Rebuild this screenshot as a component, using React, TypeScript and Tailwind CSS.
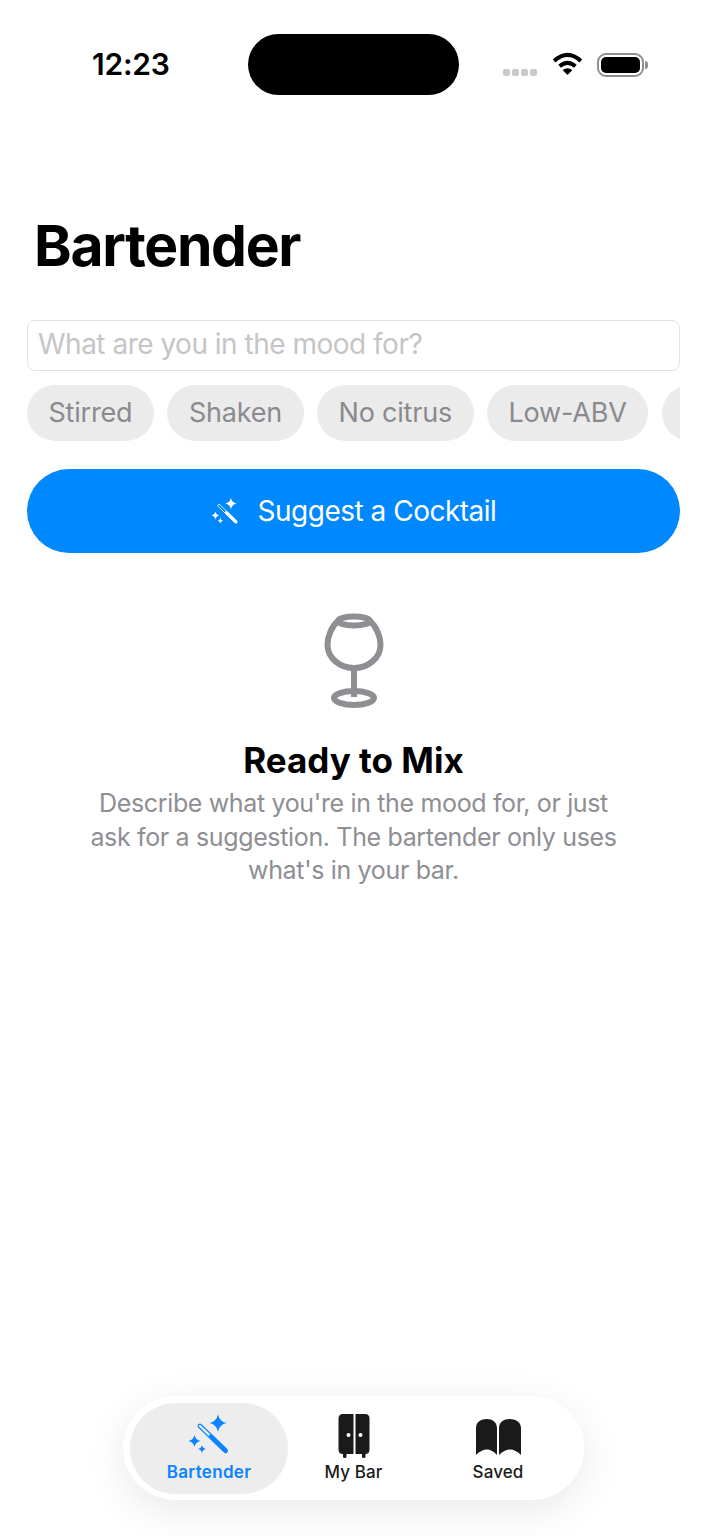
import React from "react";

const chips = ["Stirred", "Shaken", "No citrus", "Low-ABV"];

/* ---------- Icons ---------- */
const sparkle = (cx: number, cy: number, r: number) => {
  const k = r * 0.18;
  return `M${cx} ${cy - r}Q${cx + k} ${cy - k} ${cx + r} ${cy}Q${cx + k} ${cy + k} ${cx} ${cy + r}Q${cx - k} ${cy + k} ${cx - r} ${cy}Q${cx - k} ${cy - k} ${cx} ${cy - r}Z`;
};

const WandIcon: React.FC<{ className: string }> = ({ className }) => (
  <svg viewBox="0 -2 42 44" className={className} fill="currentColor">
    <path d={sparkle(30, 8, 8.5)} />
    <path d={sparkle(6.5, 26, 6)} />
    <path d={sparkle(14, 34, 4)} />
    <g transform="translate(12 11) rotate(44)">
      <rect x="-1.8" y="-1.8" width="38" height="3.6" rx="1.8" fill="none" stroke="currentColor" strokeWidth="1.2" />
      <rect x="13" y="-2.3" width="25" height="4.6" rx="2.3" />
    </g>
  </svg>
);

const GlassIcon = () => (
  <svg viewBox="0 0 68 100" className="h-[100px] w-[68px] text-[#8e8e93]" fill="none" stroke="currentColor" strokeWidth="6">
    <ellipse cx="34" cy="11" rx="16" ry="4.5" />
    <path d="M18 11C12 16 7.5 26 7.5 35C7.5 48 20 58 34 58C48 58 60.5 48 60.5 35C60.5 26 56 16 50 11" />
    <path d="M34 58V87" />
    <ellipse cx="34" cy="88" rx="20" ry="7" />
  </svg>
);

const CabinetIcon = () => (
  <svg viewBox="0 0 32 46" className="h-[46px] w-[32px] text-[#1a1a1a]" fill="currentColor">
    <path fillRule="evenodd" d="M5 1H15.5V41H5Q.5 41 .5 36.5V5.5Q.5 1 5 1ZM10.5 20a2 2 0 1 0 0 4a2 2 0 1 0 0-4Z" />
    <path fillRule="evenodd" d="M17.5 1H27Q31.5 1 31.5 5.5V36.5Q31.5 41 27 41H17.5ZM22.5 20a2 2 0 1 0 0 4a2 2 0 1 0 0-4Z" />
    <rect x="5" y="39" width="3.5" height="6" rx="1.5" />
    <rect x="24" y="39" width="3.5" height="6" rx="1.5" />
  </svg>
);

const BookIcon = () => (
  <svg viewBox="0 0 46 46" className="h-[46px] w-[46px] text-[#1a1a1a]" fill="currentColor">
    <path d="M1 42V15C1 9 6 6 12 6C17 6 22 9 22 15V42Q12 31 1 42Z" />
    <path d="M24 15C24 9 29 6 34.5 6C40.5 6 46 9 46 15V42Q35 31 24 42Z" />
  </svg>
);

const WifiIcon = () => (
  <svg viewBox="0 0 31 23" className="h-[23px] w-[31px]">
    <path d="M2.2 9Q15.5 -3.2 28.8 9" fill="none" stroke="black" strokeWidth="4" />
    <path d="M7.6 14.2Q15.5 7.6 23.4 14.2" fill="none" stroke="black" strokeWidth="4" />
    <path d="M15.5 23L10.6 18Q15.5 14.6 20.4 18Z" fill="black" />
  </svg>
);

/* ---------- Status bar ---------- */
const StatusBar = () => (
  <div className="grid h-[61px] grid-cols-[248px_211px_248px] items-center">
    <span className="pl-[92px] text-[30px] font-semibold tracking-[-0.2px] text-black">12:23</span>
    <div className="h-[61px] rounded-[31px] bg-black" />
    <div className="flex items-center pl-[44px]">
      <div className="mt-[15px] flex gap-[2px]">
        <span className="size-[7px] rounded-[2px] bg-[#c9c9c9]" />
        <span className="size-[7px] rounded-[2px] bg-[#c9c9c9]" />
        <span className="size-[7px] rounded-[2px] bg-[#c9c9c9]" />
        <span className="size-[7px] rounded-[2px] bg-[#c9c9c9]" />
      </div>
      <div className="ml-[15px] -mt-[2px]">
        <WifiIcon />
      </div>
      <div className="ml-[14px] flex items-center">
        <div className="h-[24px] w-[47px] rounded-[9px] border-2 border-[#8f8f8f] p-[2px]">
          <div className="h-full w-full rounded-[5px] bg-black" />
        </div>
        <div className="ml-[1px] h-[8px] w-[3px] rounded-r-full bg-[#8f8f8f]" />
      </div>
    </div>
  </div>
);

/* ---------- Tab bar ---------- */
const TabBar = () => (
  <nav className="mx-auto mb-[36px] mt-auto grid h-[104px] w-[461px] grid-cols-[158px_131px_158px] rounded-full bg-white p-[7px] shadow-[0_10px_40px_rgba(0,0,0,0.09)]">
    <div className="flex h-[91px] flex-col items-center rounded-full bg-[#ededed] pt-[10px] text-[#0a84ff]">
      <WandIcon className="h-[44px] w-[42px]" />
      <span className="mt-[5px] text-[17px] font-semibold leading-[20px] tracking-[0.3px]">Bartender</span>
    </div>
    <div className="flex flex-col items-center pt-[10px] text-[#1a1a1a]">
      <CabinetIcon />
      <span className="mt-[3px] text-[17px] font-medium leading-[20px] tracking-[0.1px]">My Bar</span>
    </div>
    <div className="flex flex-col items-center pt-[10px] text-[#1a1a1a]">
      <BookIcon />
      <span className="mt-[3px] text-[17px] font-medium leading-[20px] tracking-[0.1px]">Saved</span>
    </div>
  </nav>
);

export default function App() {
  return (
    <div className="flex h-[1536px] w-[707px] flex-col overflow-hidden bg-white pt-[34px] font-['Inter',sans-serif]">
      <StatusBar />

      <main className="px-[27px]">
        <h1 className="mt-[115px] pl-[7px] text-[57px] font-bold leading-[71px] tracking-[-1.3px] text-black">Bartender</h1>

        <input
          type="text"
          placeholder="What are you in the mood for?"
          className="mt-[39px] block h-[51px] w-full rounded-[8px] border border-[#e3e3e5] px-[10px] pb-[4px] text-[28px] tracking-[-0.5px] outline-none placeholder:text-[#c5c5c7]"
        />

        {/* Quick filters */}
        <div className="mt-[14px] flex gap-[13.5px] overflow-hidden">
          {chips.map((chip) => (
            <span
              key={chip}
              className="flex h-[56px] shrink-0 items-center rounded-full bg-[#ebebeb] px-[21.5px] pt-[1px] text-[27px] tracking-[-0.2px] text-[#8a8a8e]"
            >
              {chip}
            </span>
          ))}
          {/* next chip, only its edge is on screen */}
          <span className="h-[56px] w-[80px] shrink-0 rounded-full bg-[#ebebeb]" />
        </div>

        <button className="mt-[28px] flex h-[84px] w-full items-center justify-center gap-[19px] rounded-full bg-[#0088ff] text-[28px] tracking-[-0.5px] text-white">
          <WandIcon className="h-[29px] w-[28px]" />
          Suggest a Cocktail
        </button>

        {/* Empty state */}
        <div className="mt-[57px] flex flex-col items-center text-center">
          <GlassIcon />
          <h2 className="mt-[28px] text-[35px] font-bold leading-[44px] text-black">Ready to Mix</h2>
          <p className="mt-[5px] text-[25px] leading-[33.5px] tracking-[-0.35px] text-[#8e8e93]">
            Describe what you're in the mood for, or just
            <br />
            ask for a suggestion. The bartender only uses
            <br />
            what's in your bar.
          </p>
        </div>
      </main>

      <TabBar />
    </div>
  );
}
